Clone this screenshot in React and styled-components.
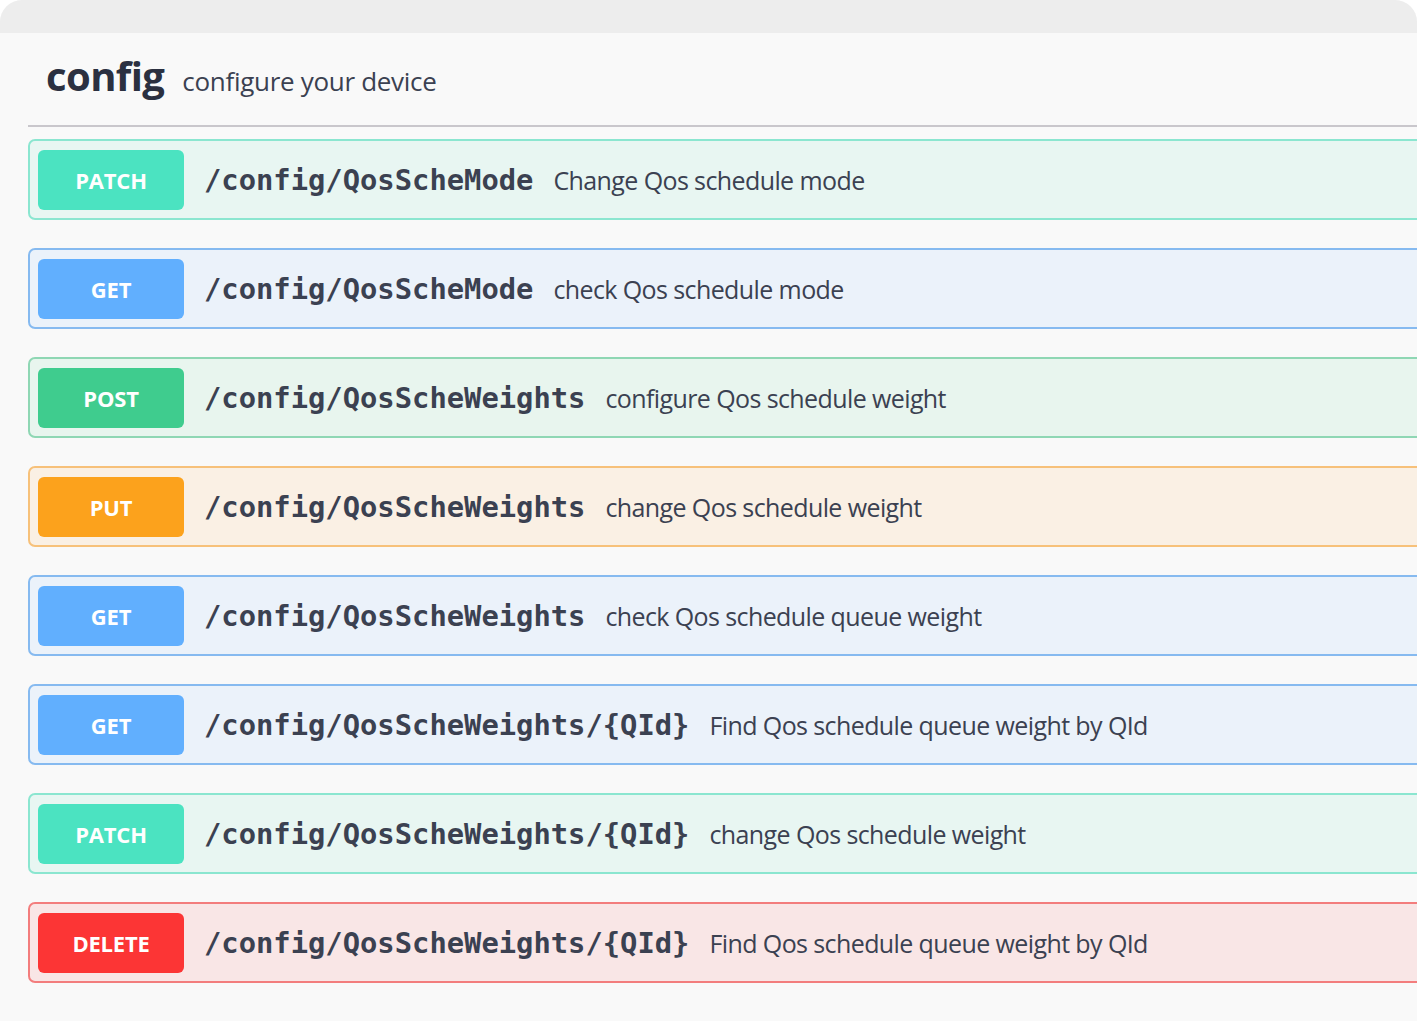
import styled, { createGlobalStyle } from "styled-components";

const GlobalStyle = createGlobalStyle`
  html, body {
    margin: 0;
    padding: 0;
    background: #ffffff;
  }
  body {
    font-family: "Open Sans", "Liberation Sans", sans-serif;
  }
`;

const METHODS = {
  patch: { color: "#4be3c1", border: "#8be6d0", bg: "#e8f6f2" },
  get: { color: "#61affe", border: "#86baf0", bg: "#ebf2fa" },
  post: { color: "#3fcc8e", border: "#8fd7b4", bg: "#e8f5ee" },
  put: { color: "#fca21c", border: "#f7c17a", bg: "#faf0e4" },
  delete: { color: "#fc3535", border: "#f37d7d", bg: "#f9e6e6" },
};

const ops = [
  { method: "patch", path: "/config/QosScheMode", summary: "Change Qos schedule mode" },
  { method: "get", path: "/config/QosScheMode", summary: "check Qos schedule mode" },
  { method: "post", path: "/config/QosScheWeights", summary: "configure Qos schedule weight" },
  { method: "put", path: "/config/QosScheWeights", summary: "change Qos schedule weight" },
  { method: "get", path: "/config/QosScheWeights", summary: "check Qos schedule queue weight" },
  { method: "get", path: "/config/QosScheWeights/{QId}", summary: "Find Qos schedule queue weight by QId" },
  { method: "patch", path: "/config/QosScheWeights/{QId}", summary: "change Qos schedule weight" },
  { method: "delete", path: "/config/QosScheWeights/{QId}", summary: "Find Qos schedule queue weight by QId" },
];

const Window = styled.div`
  width: 1417px;
  height: 1021px;
  border-radius: 22px 22px 0 0;
  overflow: hidden;
  background: #f9f9f9;
  display: flex;
  flex-direction: column;
`;

const TitleBar = styled.div`
  height: 33px;
  flex: none;
  background: #ededed;
`;

const Content = styled.div`
  padding-left: 28px;
  margin-right: -20px;
`;

const TagHeader = styled.div`
  display: flex;
  align-items: baseline;
  gap: 18px;
  height: 94px;
  box-sizing: border-box;
  padding: 15px 0 0 18px;
  border-bottom: 2px solid #c9c7cc;
  margin-bottom: 12px;
`;

const TagName = styled.span`
  font-size: 40px;
  font-weight: 700;
  color: #2b3040;
  letter-spacing: -0.6px;
`;

const TagDesc = styled.span`
  font-size: 26px;
  color: #3b4151;
  letter-spacing: -0.3px;
`;

const OpList = styled.div`
  display: flex;
  flex-direction: column;
  gap: 28px;
`;

const OpBlock = styled.div`
  height: 81px;
  box-sizing: border-box;
  display: flex;
  align-items: center;
  gap: 20px;
  padding-left: 8px;
  border: 2px solid ${({ $m }) => METHODS[$m].border};
  background: ${({ $m }) => METHODS[$m].bg};
  border-radius: 7px;
`;

const Method = styled.span`
  width: 146px;
  height: 60px;
  flex: none;
  display: flex;
  align-items: center;
  justify-content: center;
  border-radius: 6px;
  background: ${({ $m }) => METHODS[$m].color};
  color: #ffffff;
  font-size: 22px;
  font-weight: 700;
  letter-spacing: -0.2px;
`;

const Path = styled.span`
  font-family: "DejaVu Sans Mono", "Liberation Mono", monospace;
  font-size: 28.8px;
  font-weight: 700;
  color: #3b4151;
`;

const Summary = styled.span`
  font-size: 25px;
  color: #3b4151;
  letter-spacing: -0.6px;
`;

export default function App() {
  return (
    <>
      <GlobalStyle />
      <Window>
        <TitleBar />
        <Content>
          <TagHeader>
            <TagName>config</TagName>
            <TagDesc>configure your device</TagDesc>
          </TagHeader>
          <OpList>
            {ops.map((op, i) => (
              <OpBlock key={i} $m={op.method}>
                <Method $m={op.method}>{op.method.toUpperCase()}</Method>
                <Path>{op.path}</Path>
                <Summary>{op.summary}</Summary>
              </OpBlock>
            ))}
          </OpList>
        </Content>
      </Window>
    </>
  );
}
